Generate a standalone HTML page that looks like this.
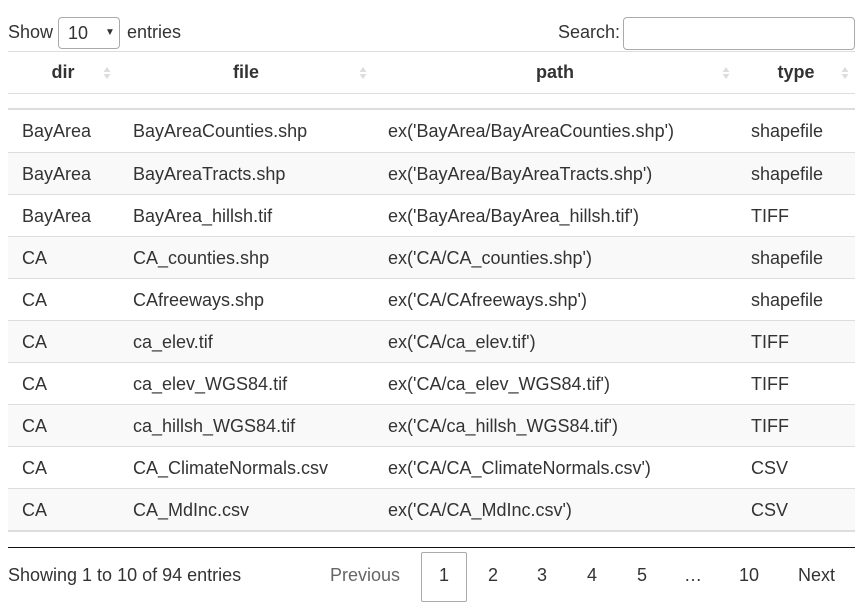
<!DOCTYPE html>
<html><head><meta charset="utf-8"><style>
body{margin:0;width:857px;height:595px;overflow:hidden;background:#fff;font-family:"Liberation Sans",sans-serif;font-size:18px;color:#333;position:relative}
.abs{position:absolute}
.sel{left:58px;top:17px;width:62px;height:32px;border:1px solid #aaa;border-radius:4px;box-sizing:border-box}
.inp{left:623px;top:17px;width:232px;height:33px;border:1px solid #aaa;border-radius:4px;box-sizing:border-box}
.hl{left:8px;width:847px;height:1px;background:#ddd}
.row{position:absolute;left:8px;width:847px;height:42px;border-top:1px solid #ddd;box-sizing:border-box}
.row span{position:absolute;top:11px;white-space:nowrap}
.hd span{position:absolute;top:10px;white-space:nowrap;font-weight:bold;transform:translateX(-50%)}
.arr{position:absolute;top:13px;width:8px;height:16px}
.pg{position:absolute;top:565px}
</style></head><body>
<div class="abs" style="left:8px;top:22px">Show</div>
<div class="abs sel"><span style="position:absolute;left:9px;top:5px">10</span><span style="position:absolute;left:46px;top:9px;font-size:10px">▼</span></div>
<div class="abs" style="left:127px;top:22px">entries</div>
<div class="abs" style="left:558px;top:22px">Search:</div>
<div class="abs inp"></div>
<div class="abs hl" style="top:51px"></div>
<div class="abs hd" style="left:8px;top:52px;width:847px;height:41px">
<span style="left:55px">dir</span><span style="left:238px">file</span><span style="left:547px">path</span><span style="left:788px">type</span>
<svg class="arr" style="left:95px" viewBox="0 0 8 16"><path d="M4 2L7.5 7H.5z M4 14L7.5 9H.5z" fill="#ddd"/></svg>
<svg class="arr" style="left:351px" viewBox="0 0 8 16"><path d="M4 2L7.5 7H.5z M4 14L7.5 9H.5z" fill="#ddd"/></svg>
<svg class="arr" style="left:714px" viewBox="0 0 8 16"><path d="M4 2L7.5 7H.5z M4 14L7.5 9H.5z" fill="#ddd"/></svg>
<svg class="arr" style="left:833px" viewBox="0 0 8 16"><path d="M4 2L7.5 7H.5z M4 14L7.5 9H.5z" fill="#ddd"/></svg>
</div>
<div class="abs hl" style="top:93px"></div>
<div class="abs" style="left:8px;top:108px;width:847px;height:2px;background:#ddd"></div>
<div class="row" style="top:110px;border-top:none"><span style="left:14px">BayArea</span><span style="left:125px">BayAreaCounties.shp</span><span style="left:380px">ex('BayArea/BayAreaCounties.shp')</span><span style="left:743px">shapefile</span></div>
<div class="row" style="top:152px;background:#f9f9f9"><span style="left:14px">BayArea</span><span style="left:125px">BayAreaTracts.shp</span><span style="left:380px">ex('BayArea/BayAreaTracts.shp')</span><span style="left:743px">shapefile</span></div>
<div class="row" style="top:194px"><span style="left:14px">BayArea</span><span style="left:125px">BayArea_hillsh.tif</span><span style="left:380px">ex('BayArea/BayArea_hillsh.tif')</span><span style="left:743px">TIFF</span></div>
<div class="row" style="top:236px;background:#f9f9f9"><span style="left:14px">CA</span><span style="left:125px">CA_counties.shp</span><span style="left:380px">ex('CA/CA_counties.shp')</span><span style="left:743px">shapefile</span></div>
<div class="row" style="top:278px"><span style="left:14px">CA</span><span style="left:125px">CAfreeways.shp</span><span style="left:380px">ex('CA/CAfreeways.shp')</span><span style="left:743px">shapefile</span></div>
<div class="row" style="top:320px;background:#f9f9f9"><span style="left:14px">CA</span><span style="left:125px">ca_elev.tif</span><span style="left:380px">ex('CA/ca_elev.tif')</span><span style="left:743px">TIFF</span></div>
<div class="row" style="top:362px"><span style="left:14px">CA</span><span style="left:125px">ca_elev_WGS84.tif</span><span style="left:380px">ex('CA/ca_elev_WGS84.tif')</span><span style="left:743px">TIFF</span></div>
<div class="row" style="top:404px;background:#f9f9f9"><span style="left:14px">CA</span><span style="left:125px">ca_hillsh_WGS84.tif</span><span style="left:380px">ex('CA/ca_hillsh_WGS84.tif')</span><span style="left:743px">TIFF</span></div>
<div class="row" style="top:446px"><span style="left:14px">CA</span><span style="left:125px">CA_ClimateNormals.csv</span><span style="left:380px">ex('CA/CA_ClimateNormals.csv')</span><span style="left:743px">CSV</span></div>
<div class="row" style="top:488px;background:#f9f9f9"><span style="left:14px">CA</span><span style="left:125px">CA_MdInc.csv</span><span style="left:380px">ex('CA/CA_MdInc.csv')</span><span style="left:743px">CSV</span></div>
<div class="abs" style="left:8px;top:530px;width:847px;height:2px;background:#ddd"></div>
<div class="abs" style="left:8px;top:547px;width:847px;height:1px;background:#111"></div>
<div class="pg" style="left:8px">Showing 1 to 10 of 94 entries</div>
<div class="abs" style="left:421px;top:552px;width:46px;height:50px;border:1px solid #aaa;border-radius:2px;box-sizing:border-box"></div>
<div class="pg" style="left:330px;color:#666">Previous</div>
<div class="pg" style="left:439px">1</div>
<div class="pg" style="left:488px">2</div>
<div class="pg" style="left:537px">3</div>
<div class="pg" style="left:587px">4</div>
<div class="pg" style="left:637px">5</div>
<div class="pg" style="left:684px">…</div>
<div class="pg" style="left:739px">10</div>
<div class="pg" style="left:798px">Next</div>
</body></html>
